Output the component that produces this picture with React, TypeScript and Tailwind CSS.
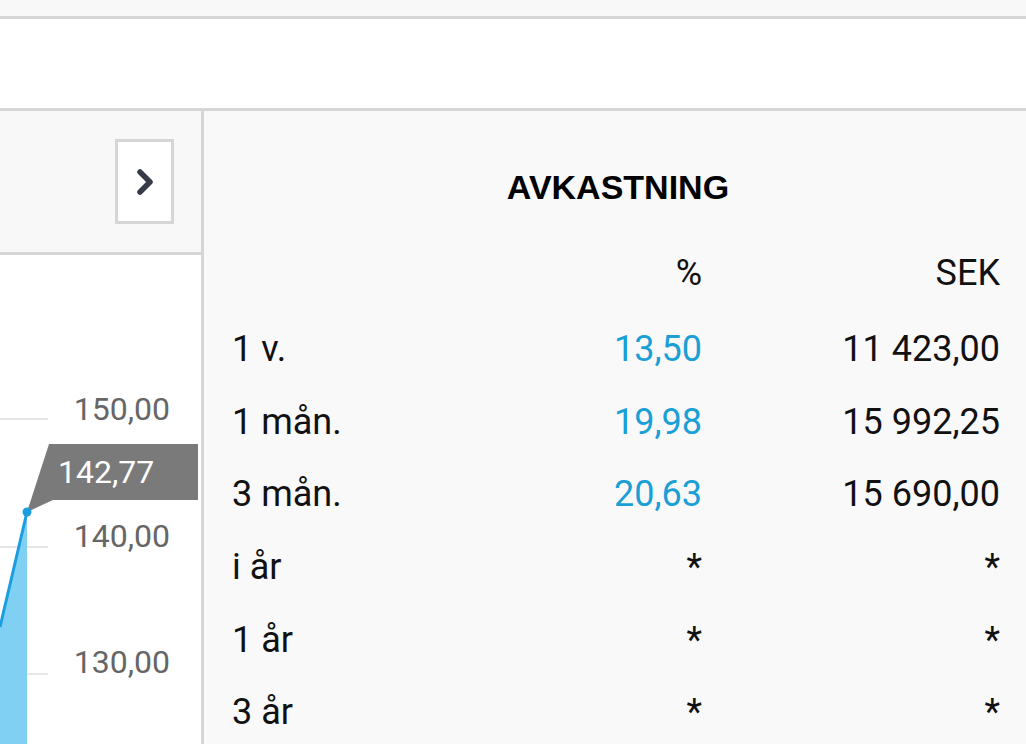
import React from "react";

const rows = [
  { label: "1 v.", pct: "13,50", sek: "11 423,00", blue: true },
  { label: "1 mån.", pct: "19,98", sek: "15 992,25", blue: true },
  { label: "3 mån.", pct: "20,63", sek: "15 690,00", blue: true },
  { label: "i år", pct: "*", sek: "*", blue: false },
  { label: "1 år", pct: "*", sek: "*", blue: false },
  { label: "3 år", pct: "*", sek: "*", blue: false },
];

export default function App() {
  return (
    <div
      className="w-[1026px] h-[744px] overflow-hidden bg-white flex flex-col"
      style={{ fontFamily: "Roboto, 'Noto Sans', sans-serif" }}
    >
      <div className="h-[19px] shrink-0 bg-[#f8f8f8] border-b-[3px] border-[#d6d6d6]" />
      <div className="h-[92px] shrink-0 bg-white border-b-[3px] border-[#d6d6d6]" />
      <div className="flex flex-1 min-h-0">
        {/* left panel */}
        <div className="w-[204px] shrink-0 border-r-[3px] border-[#d6d6d6] flex flex-col">
          <div className="h-[144px] shrink-0 bg-[#f8f8f8] border-b-[3px] border-[#d6d6d6] flex justify-end items-start pt-[28px] pr-[27px]">
            <button className="w-[59px] h-[85px] bg-white border-[3px] border-[#d6d6d6] flex items-center justify-center">
              <svg width="22" height="32" viewBox="0 0 22 32">
                <path
                  d="M6 6 L16 16 L6 26"
                  fill="none"
                  stroke="#363b45"
                  strokeWidth="5.5"
                  strokeLinecap="round"
                  strokeLinejoin="round"
                />
              </svg>
            </button>
          </div>
          <div className="relative flex-1 bg-white overflow-hidden">
            <svg className="absolute left-0 top-0" width="201" height="489" viewBox="0 0 201 489">
              <line x1="0" y1="164" x2="48" y2="164" stroke="#e6e6e6" strokeWidth="2" />
              <line x1="0" y1="292" x2="48" y2="292" stroke="#e6e6e6" strokeWidth="2" />
              <line x1="0" y1="419" x2="48" y2="419" stroke="#e6e6e6" strokeWidth="2" />
              <polygon points="0,372 27,257 27,489 0,489" fill="#7fd0f3" />
              <line x1="0" y1="372" x2="27" y2="257" stroke="#1a9ee0" strokeWidth="3" />
              <polygon points="49,189 198,189 198,245 53,245 27,257" fill="#7a7a7a" />
              <circle cx="27" cy="257" r="4.5" fill="#1a9ee0" />
            </svg>
            <div className="absolute left-[58px] top-[199px] text-[32px] leading-[36px] text-white">142,77</div>
            <div className="absolute right-[31px] top-[136px] text-[32px] leading-[36px] text-[#666666]">150,00</div>
            <div className="absolute right-[31px] top-[263px] text-[32px] leading-[36px] text-[#666666]">140,00</div>
            <div className="absolute right-[31px] top-[389px] text-[32px] leading-[36px] text-[#666666]">130,00</div>
          </div>
        </div>
        {/* right panel */}
        <div className="flex-1 bg-[#f9f9f9] pl-[28px] pr-[26px] pt-[54px]">
          <div
            className="text-center font-bold text-[34px] leading-[44px] text-black pl-[4px]"
            style={{ fontFamily: "'Liberation Sans', Arial, sans-serif" }}
          >
            AVKASTNING
          </div>
          <div className="mt-[27px] grid grid-cols-[250px_220px_1fr] h-[73px] items-center text-[36px] text-[#111]">
            <div />
            <div className="text-right">%</div>
            <div className="text-right">SEK</div>
          </div>
          <div className="mt-[4px]">
            {rows.map((r) => (
              <div
                key={r.label}
                className="grid grid-cols-[250px_220px_1fr] h-[72.6px] items-center text-[36px] text-[#111]"
              >
                <div>{r.label}</div>
                <div className={r.blue ? "text-right text-[#1a9fd6]" : "text-right"}>{r.pct}</div>
                <div className="text-right">{r.sek}</div>
              </div>
            ))}
          </div>
        </div>
      </div>
    </div>
  );
}
